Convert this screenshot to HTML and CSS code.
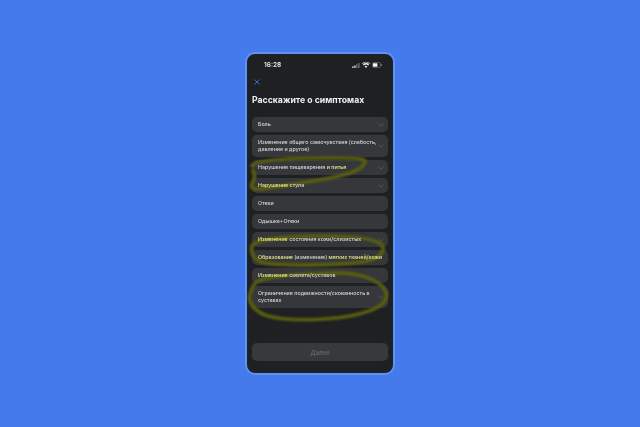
FILE: index.html
```html
<!DOCTYPE html>
<html lang="ru">
<head>
<meta charset="utf-8">
<title>Расскажите о симптомах</title>
<link rel="stylesheet" href="styles.css">
</head>
<body>
<main class="phone">
  <div class="status">
    <span class="time">16:28</span>
    <span class="status-icons">
      <svg width="8" height="5" viewBox="0 0 9 6"><rect x="0" y="4" width="1.5" height="2" fill="#ddd"/><rect x="2.4" y="3" width="1.5" height="3" fill="#ddd"/><rect x="4.8" y="1.5" width="1.5" height="4.500" fill="#777"/><rect x="7.2" y="0" width="1.5" height="6" fill="#777"/></svg>
      <svg width="8" height="6" viewBox="0 0 8 6"><path d="M4 6 2.700 4.400a2 2 0 0 1 2.600 0zM1.900 3.500.9 2.400a4.700 4.700 0 0 1 6.200 0l-1 1.100a3.200 3.200 0 0 0-4.200 0zM.4 1.900 0 1.400a6 6 0 0 1 8 0l-.4.500a5.400 5.400 0 0 0-7.200 0z" fill="#eee"/></svg>
      <svg width="10" height="6" viewBox="0 0 11 6"><rect x=".3" y=".3" width="9" height="5.400" rx="1.500" fill="none" stroke="#888" stroke-width=".6"/><rect x="1" y="1" width="5" height="4" rx=".8" fill="#f2f2f2"/><rect x="9.800" y="2" width="1" height="2" rx=".4" fill="#888"/></svg>
    </span>
  </div>
  <svg class="close" width="6" height="6" viewBox="0 0 6 6"><path d="M.5.5l5 5M5.500.5l-5 5" stroke="#3f6fdc" stroke-width=".9" fill="none"/></svg>
  <h1 class="title">Расскажите о симптомах</h1>
  <ul class="list">
    <li class="row"><span class="label">Боль</span><svg class="chev" width="6" height="4" viewBox="0 0 6 4"><path d="M.4.7 3 3.200 5.600.7"/></svg></li>
    <li class="row"><span class="label">Изменение общего самочувствия (слабость, давление и другое)</span><svg class="chev" width="6" height="4" viewBox="0 0 6 4"><path d="M.4.7 3 3.200 5.600.7"/></svg></li>
    <li class="row"><span class="label">Нарушение пищеварения <b class="hl">и питья</b></span><svg class="chev" width="6" height="4" viewBox="0 0 6 4"><path d="M.4.7 3 3.200 5.600.7"/></svg></li>
    <li class="row"><span class="label"><b class="hl">Нарушение</b> стула</span><svg class="chev" width="6" height="4" viewBox="0 0 6 4"><path d="M.4.7 3 3.200 5.600.7"/></svg></li>
    <li class="row"><span class="label">Отеки</span></li>
    <li class="row"><span class="label">Одышка+Отеки</span></li>
    <li class="row"><span class="label"><b class="hl">Изменение</b> состояния кожи/слизистых</span><svg class="chev" width="6" height="4" viewBox="0 0 6 4"><path d="M.4.7 3 3.200 5.600.7"/></svg></li>
    <li class="row"><span class="label"><b class="hl">Образование</b> (изменение) <b class="hl">мягких тканей/кожи</b></span></li>
    <li class="row"><span class="label"><b class="hl">Изменение</b> скелета/суставов</span></li>
    <li class="row"><span class="label">Ограничение подвижности/скованность в суставах</span><svg class="chev" width="6" height="4" viewBox="0 0 6 4"><path d="M.4.7 3 3.200 5.600.7"/></svg></li>
  </ul>
  <button class="next" type="button">Далее</button>
  <svg class="marks" width="150" height="323" viewBox="245 52 150 323">
    <path d="M252 166C256 160 290 158 330 158 352 158 366 158 365 162 364 168 352 174 330 178 305 183 280 186 262 189 254 190 250 188 252 184 254 180 256 176 253 171"/>
    <path d="M252 246C256 239 285 236 320 236 350 236 375 238 382 245 386 252 378 260 362 262 330 266 285 266 265 263 255 261 250 254 252 246Z"/>
    <path d="M255 283C262 276 300 274 330 273 356 272 380 278 386 292 389 303 376 311 350 316 320 321 285 321 268 316 255 312 248 303 250 295 251 290 253 286 255 283Z"/>
  </svg>
</main>
</body>
</html>
```
FILE: styles.css
```css
* { box-sizing: border-box; }
html, body { margin: 0; height: 100%; }
body {
  width: 640px;
  height: 427px;
  background: #447aec;
  padding: 52px 0 0 245px;
  font-family: Inter, "Liberation Sans", sans-serif;
  overflow: hidden;
}
.phone {
  position: relative;
  width: 150px;
  height: 323px;
  background: #1f2023;
  border: 2px solid #5d94f2;
  border-radius: 10px;
  padding: 0 5px;
  display: flex;
  flex-direction: column;
  filter: blur(.3px);
}
.status {
  display: flex;
  justify-content: space-between;
  align-items: center;
  height: 8px;
  margin-top: 7px;
  padding: 0 6px 0 12px;
}
.time { color: #e8e8e8; font-size: 6.500px; font-weight: 600; }
.status-icons { display: flex; align-items: center; gap: 2px; }
.close { margin: 10px 0 0 1.500px; }
.title {
  margin: 10px 0 0;
  color: #f1f1f1;
  font-size: 8.700px;
  font-weight: 700;
  line-height: 11px;
  white-space: nowrap;
}
.list {
  list-style: none;
  margin: 11px 0 0;
  padding: 0;
  display: flex;
  flex-direction: column;
  gap: 3px;
}
.row {
  display: flex;
  align-items: center;
  justify-content: space-between;
  min-height: 15px;
  padding: 3.500px 4.500px 3.500px 6px;
  background: #35373b;
  border-radius: 5px;
  color: #d6d6d6;
  font-size: 5.300px;
  font-weight: 500;
  line-height: 7.600px;
}
.label { position: relative; z-index: 2; flex: 1; min-width: 0; }
.hl { font-weight: 500; color: #e6e88a; }
.chev { flex: none; fill: none; stroke: #5f6165; stroke-width: .7; margin-left: 1px; }
.next {
  margin-top: 35px;
  height: 18px;
  border: 0;
  border-radius: 5px;
  background: #37393c;
  color: #67696c;
  font: 600 6px Inter, "Liberation Sans", sans-serif;
}
.marks {
  position: absolute;
  left: -2px;
  top: -2px;
  z-index: 1;
  pointer-events: none;
  fill: none;
  stroke: #5b5f0f;
  stroke-width: 3.600;
  stroke-linecap: round;
  stroke-linejoin: round;
  filter: blur(.8px);
}
```
